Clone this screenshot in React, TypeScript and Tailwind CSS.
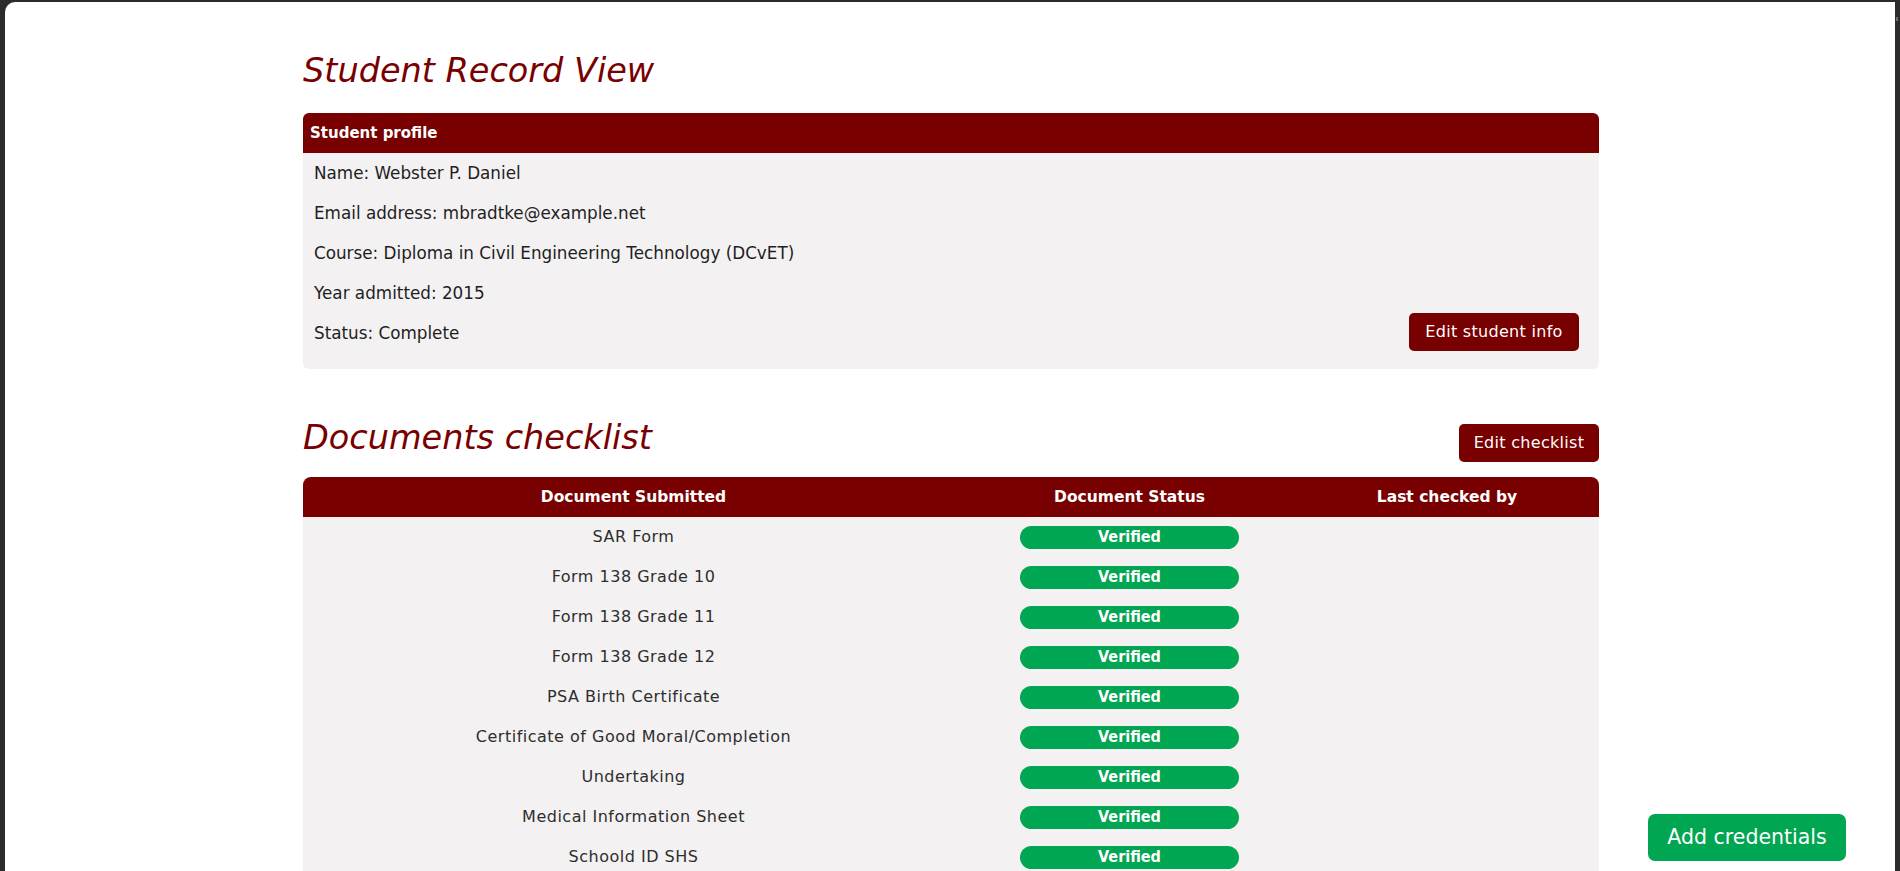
import React from "react";

const profile = [
  "Name: Webster P. Daniel",
  "Email address: mbradtke@example.net",
  "Course: Diploma in Civil Engineering Technology (DCvET)",
  "Year admitted: 2015",
];

const docs = [
  "SAR Form",
  "Form 138 Grade 10",
  "Form 138 Grade 11",
  "Form 138 Grade 12",
  "PSA Birth Certificate",
  "Certificate of Good Moral/Completion",
  "Undertaking",
  "Medical Information Sheet",
  "Schoold ID SHS",
];

export default function App() {
  return (
    <div className="h-screen w-full bg-[#2b2b2b] pt-[2px] px-[5px] overflow-hidden font-['DejaVu_Sans',sans-serif] relative">
      <div className="absolute right-[2px] top-[17px] w-[2px] h-[4px] bg-[#6b6b6b]" />
      <div className="relative h-full w-full bg-white rounded-tl-[10px] overflow-hidden">
        <div className="w-[1296px] mx-auto pt-[49px] translate-x-[1px]">
          <h1 className="text-[33.5px] leading-[40px] italic text-[#780000]">Student Record View</h1>

          <div className="mt-[22px] rounded-[6px] bg-[#f3f1f2] overflow-hidden">
            <div className="h-[40px] bg-[#780000] flex items-center px-[7px] text-white font-bold text-[15px]">
              Student profile
            </div>
            <div className="pl-[11px] pr-[20px] pt-[1px] pb-[15px] text-[16.8px] text-[#1e1e1e]">
              {profile.map((p) => (
                <div key={p} className="h-[40px] flex items-center">{p}</div>
              ))}
              <div className="h-[40px] flex items-center justify-between">
                <span>Status: Complete</span>
                <button className="w-[170px] h-[38px] -mt-[4px] rounded-[5px] bg-[#780000] text-white text-[16px] tracking-[0.3px] flex items-center justify-center">
                  Edit student info
                </button>
              </div>
            </div>
          </div>

          <div className="mt-[49px] flex items-end justify-between">
            <h2 className="text-[33.5px] leading-[40px] italic text-[#780000] mb-[4px]">Documents checklist</h2>
            <button className="w-[140px] h-[38px] rounded-[5px] bg-[#780000] text-white text-[16px] tracking-[0.3px] flex items-center justify-center">
              Edit checklist
            </button>
          </div>

          <div className="mt-[15px] rounded-t-[8px] overflow-hidden bg-[#f3f1f2]">
            <div className="grid grid-cols-[661px_331px_304px] h-[40px] pt-[2px] bg-[#780000] text-white font-bold text-[15.5px] items-center text-center">
              <div>Document Submitted</div>
              <div>Document Status</div>
              <div>Last checked by</div>
            </div>
            {docs.map((d) => (
              <div key={d} className="grid grid-cols-[661px_331px_304px] h-[40px] items-center text-center">
                <div className="text-[16px] tracking-[0.5px] text-[#2e2e2e]">{d}</div>
                <div className="flex justify-center">
                  <span className="w-[219px] h-[23px] rounded-full bg-[#00a651] text-white font-bold text-[16px] font-['DejaVu_Sans_Condensed','DejaVu_Sans',sans-serif] flex items-center justify-center">
                    Verified
                  </span>
                </div>
                <div />
              </div>
            ))}
          </div>
        </div>

        <button className="absolute right-[49px] bottom-[10px] w-[198px] h-[47px] rounded-[7px] bg-[#00a651] text-white text-[20.5px] flex items-center justify-center">
          Add credentials
        </button>
      </div>
    </div>
  );
}
